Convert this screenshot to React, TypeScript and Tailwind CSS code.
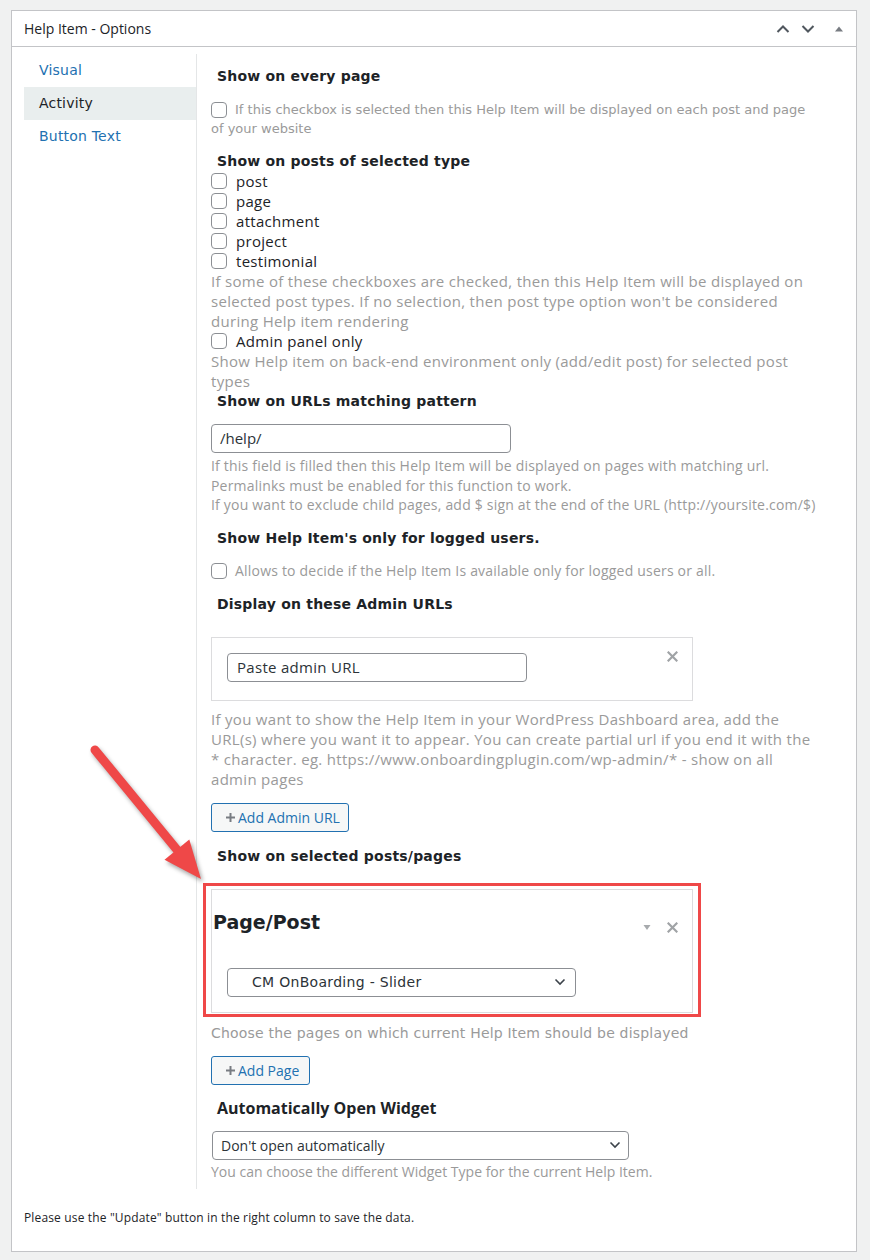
import React from "react";

const OS = "font-['Open_Sans',sans-serif]";
const DV = "font-['DejaVu_Sans',sans-serif]";

function CB({ className = "" }: { className?: string }) {
  return (
    <span
      className={
        "inline-block w-4 h-4 shrink-0 rounded-[4px] border border-[#8c8f94] bg-white " +
        className
      }
    />
  );
}

function H({ children, className = "" }: { children: React.ReactNode; className?: string }) {
  return (
    <h3
      className={
        "ml-[6px] font-['DejaVu_Sans',sans-serif] font-bold text-[14px] leading-[20px] tracking-[0.2px] text-[#1d2327] " +
        className
      }
    >
      {children}
    </h3>
  );
}

function XIcon({ className = "" }: { className?: string }) {
  return (
    <svg width="11" height="11" viewBox="0 0 11 11" className={className}>
      <path d="M1.5 1.5 L9.5 9.5 M9.5 1.5 L1.5 9.5" stroke="#a0a3a6" strokeWidth="2.2" strokeLinecap="square" />
    </svg>
  );
}

function SelChevron() {
  return (
    <svg width="12" height="8" viewBox="0 0 12 8">
      <path d="M1.5 1.5 L6 6 L10.5 1.5" stroke="#3c434a" strokeWidth="1.6" fill="none" />
    </svg>
  );
}

function Label({ text }: { text: string }) {
  return (
    <div className="flex items-center h-[20px] gap-[9px]">
      <CB />
      <span className={OS + " text-[15px] tracking-[0.3px] text-[#1d2327]"}>{text}</span>
    </div>
  );
}

function PlusButton({ text, w }: { text: string; w: string }) {
  return (
    <div
      className={
        "flex items-center h-[29px] rounded-[3px] border border-[#2271b1] bg-[#f6f7f7] pl-[13px] " + w
      }
    >
      <svg width="11" height="11" viewBox="0 0 11 11" className="mr-[2px]">
        <path d="M5.5 1 V10 M1 5.5 H10" stroke="#787c82" strokeWidth="2" />
      </svg>
      <span className={OS + " text-[14px] text-[#2271b1]"}>{text}</span>
    </div>
  );
}

export default function App() {
  return (
    <div className="relative min-h-[1260px] bg-[#f0f1f1] pt-[10px] pl-[11px] pr-[13px] pb-[9px]">
      <div className="bg-white border border-[#c3c4c7]">
        {/* Header */}
        <div className="flex items-center h-[36px] border-b border-[#c3c4c7] pl-[12px] pr-[11px]">
          <div className={OS + " flex-1 text-[14px] font-medium text-[#1d2327]"}>Help Item - Options</div>
          <svg width="14" height="14" viewBox="0 0 14 14">
            <path d="M1.5 10 L7 4.5 L12.5 10" stroke="#50575e" strokeWidth="2" fill="none" />
          </svg>
          <svg width="14" height="14" viewBox="0 0 14 14" className="ml-[11px]">
            <path d="M1.5 4 L7 9.5 L12.5 4" stroke="#50575e" strokeWidth="2" fill="none" />
          </svg>
          <svg width="12" height="12" viewBox="0 0 12 12" className="ml-[18px]">
            <path d="M2 8.5 L6 3.5 L10 8.5 Z" fill="#787c82" />
          </svg>
        </div>

        {/* Body */}
        <div className="flex pt-[7px] pl-[12px]">
          {/* Nav */}
          <div className={DV + " w-[172px] shrink-0 text-[14px] tracking-[0.2px]"}>
            <div className="h-[33px] flex items-center pl-[15px] text-[#2271b1]">Visual</div>
            <div className="h-[33px] flex items-center pl-[15px] text-[#1d2327] bg-[#e9eeee]">Activity</div>
            <div className="h-[33px] flex items-center pl-[15px] text-[#2271b1]">Button Text</div>
          </div>

          {/* Content */}
          <div className="flex-1 border-l border-[#e4e6e7] pl-[14px] pr-[10px] pb-[8px]">
            <H className="mt-[12px]">Show on every page</H>
            <p className={DV + " mt-[14px] text-[13px] leading-[19px] text-[#9a9a9a]"}>
              <CB className="align-middle mr-[8px] -mt-[2px]" />
              If this checkbox is selected then this Help Item will be displayed on each post and page
              <br />
              of your website
            </p>

            <H className="mt-[13px]">Show on posts of selected type</H>
            <Label text="post" />
            <Label text="page" />
            <Label text="attachment" />
            <Label text="project" />
            <Label text="testimonial" />
            <p className={OS + " text-[15px] tracking-[0.3px] leading-[20px] text-[#9a9a9a]"}>
              If some of these checkboxes are checked, then this Help Item will be displayed on
              <br />
              selected post types. If no selection, then post type option won't be considered
              <br />
              during Help item rendering
            </p>
            <Label text="Admin panel only" />
            <p className={OS + " text-[15px] tracking-[0.3px] leading-[20px] text-[#9a9a9a]"}>
              Show Help item on back-end environment only (add/edit post) for selected post
              <br />
              types
            </p>

            <H>Show on URLs matching pattern</H>
            <div className="mt-[13px] w-[300px] h-[29px] rounded-[4px] border border-[#8c8f94] flex items-center pl-[8px]">
              <span className={OS + " text-[15px] text-[#2c3338]"}>/help/</span>
            </div>
            <p className={OS + " mt-[3px] text-[14px] tracking-[0.2px] leading-[19.5px] text-[#9a9a9a]"}>
              If this field is filled then this Help Item will be displayed on pages with matching url.
              <br />
              Permalinks must be enabled for this function to work.
              <br />
              If you want to exclude child pages, add $ sign at the end of the URL (http://yoursite.com/$)
            </p>

            <H className="mt-[13px]">Show Help Item's only for logged users.</H>
            <div className="mt-[13px] flex items-center h-[20px] gap-[8px]">
              <CB />
              <span className={OS + " text-[14px] tracking-[0.2px] text-[#9a9a9a]"}>
                Allows to decide if the Help Item Is available only for logged users or all.
              </span>
            </div>

            <H className="mt-[13px]">Display on these Admin URLs</H>
            <div className="relative mt-[23px] w-[482px] h-[64px] border border-[#dcdcde] pt-[15px] pl-[15px]">
              <div className="w-[300px] h-[29px] rounded-[4px] border border-[#8c8f94] flex items-center pl-[9px]">
                <span className={OS + " text-[15px] tracking-[0.3px] text-[#2c3338]"}>Paste admin URL</span>
              </div>
              <XIcon className="absolute right-[14px] top-[13px]" />
            </div>
            <p className={OS + " mt-[8px] text-[15px] tracking-[0.3px] leading-[20px] text-[#9a9a9a]"}>
              If you want to show the Help Item in your WordPress Dashboard area, add the
              <br />
              URL(s) where you want it to appear. You can create partial url if you end it with the
              <br />
              * character. eg. https://www.onboardingplugin.com/wp-admin/* - show on all
              <br />
              admin pages
            </p>
            <div className="mt-[14px]">
              <PlusButton text="Add Admin URL" w="w-[138px]" />
            </div>

            <H className="mt-[14px]">Show on selected posts/pages</H>
            <div className="relative mt-[23px] w-[482px] h-[124px] border border-[#dcdcde] pl-[1px] pt-[20px]">
              <div className={DV + " font-bold text-[19px] leading-[24px] text-[#1d2327]"}>Page/Post</div>
              <div className="absolute right-[14px] top-[32px] flex items-center gap-[15px]">
                <svg width="10" height="8" viewBox="0 0 10 8">
                  <path d="M1.5 2 L8.5 2 L5 7 Z" fill="#a7aaad" />
                </svg>
                <XIcon />
              </div>
              <div className="mt-[34px] ml-[14px] w-[349px] h-[29px] rounded-[4px] border border-[#8c8f94] flex items-center pl-[24px] pr-[9px]">
                <span className={DV + " flex-1 text-[14px] tracking-[0.3px] text-[#2c3338]"}>CM OnBoarding - Slider</span>
                <SelChevron />
              </div>
              <div className="pointer-events-none absolute -left-[9px] -top-[7px] -right-[9px] -bottom-[5px] border-[3px] border-[#ef4848]" />
            </div>
            <p className={DV + " mt-[10px] text-[14px] tracking-[0.2px] leading-[20px] text-[#9a9a9a]"}>
              Choose the pages on which current Help Item should be displayed
            </p>
            <div className="mt-[13px]">
              <PlusButton text="Add Page" w="w-[99px]" />
            </div>

            <h3 className={OS + " mt-[13px] ml-[6px] font-bold text-[16px] leading-[20px] text-[#1d2327]"}>
              Automatically Open Widget
            </h3>
            <div className="mt-[13px] ml-[1px] w-[417px] h-[29px] rounded-[4px] border border-[#8c8f94] flex items-center pl-[8px] pr-[7px]">
              <span className={OS + " flex-1 text-[14px] text-[#2c3338]"}>Don't open automatically</span>
              <SelChevron />
            </div>
            <p className={OS + " mt-[2px] text-[14px] leading-[19px] text-[#9a9a9a]"}>
              You can choose the different Widget Type for the current Help Item.
            </p>
          </div>
        </div>

        {/* Footer */}
        <p className={OS + " mt-[20px] mb-[24px] pl-[12px] text-[12px] tracking-[0.15px] leading-[18px] text-[#1d2327]"}>
          Please use the "Update" button in the right column to save the data.
        </p>
      </div>

      {/* Annotation arrow */}
      <svg
        className="pointer-events-none absolute left-0 top-0 drop-shadow-[2px_3px_2px_rgba(0,0,0,0.35)]"
        width="870"
        height="1260"
        viewBox="0 0 870 1260"
      >
        <line x1="95" y1="750" x2="178" y2="851" stroke="#ef4848" strokeWidth="9" strokeLinecap="round" />
        <polygon points="164.5,859.8 201,879 189.3,839.4" fill="#ef4848" />
      </svg>
    </div>
  );
}
